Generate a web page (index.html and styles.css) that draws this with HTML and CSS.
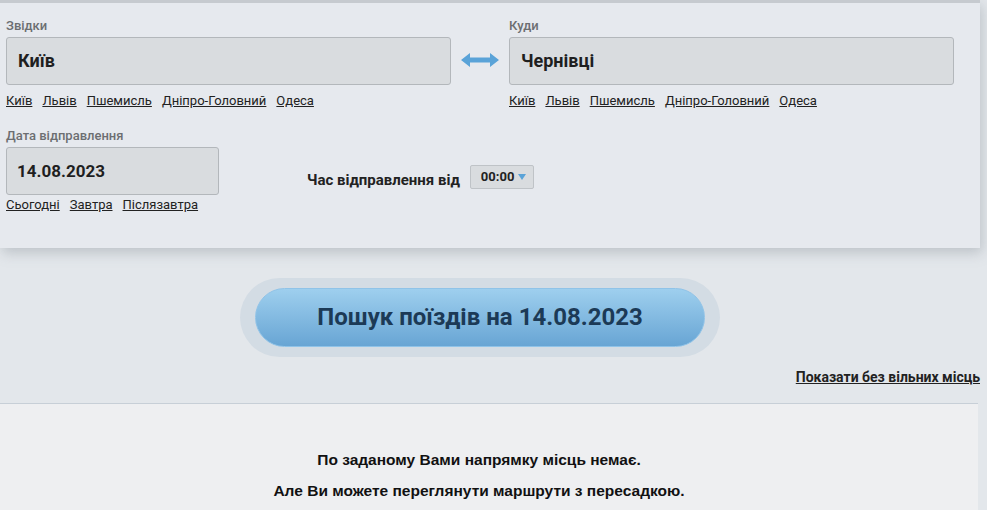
FILE: index.html
```html
<!DOCTYPE html>
<html lang="uk">

<head>
    <meta charset="UTF-8">
    <meta name="viewport" content="width=device-width, initial-scale=1.0">
    <title>Пошук поїздів</title>
    <link rel="stylesheet" href="styles.css">
</head>

<body>
    <div class="search">
        <div class="route">
            <div class="field wide">
                <div class="label">Звідки</div>
                <div class="input">Київ</div>
                <div class="links">
                    <a href="#">Київ</a>
                    <a href="#">Львів</a>
                    <a href="#">Пшемисль</a>
                    <a href="#">Дніпро-Головний</a>
                    <a href="#">Одеса</a>
                </div>
            </div>
            <div class="swap">
                <svg width="40" height="16" viewBox="0 0 40 16">
                    <path d="M1 8 L10 1 L10 5.5 L30 5.5 L30 1 L39 8 L30 15 L30 10.5 L10 10.5 L10 15 Z" fill="#5aa3d8" />
                </svg>
            </div>
            <div class="field wide">
                <div class="label">Куди</div>
                <div class="input">Чернівці</div>
                <div class="links">
                    <a href="#">Київ</a>
                    <a href="#">Львів</a>
                    <a href="#">Пшемисль</a>
                    <a href="#">Дніпро-Головний</a>
                    <a href="#">Одеса</a>
                </div>
            </div>
        </div>
        <div class="when">
            <div class="field date">
                <div class="label">Дата відправлення</div>
                <div class="input">14.08.2023</div>
                <div class="links close">
                    <a href="#">Сьогодні</a>
                    <a href="#">Завтра</a>
                    <a href="#">Післязавтра</a>
                </div>
            </div>
            <div class="time">
                <span class="time_label">Час відправлення від</span>
                <div class="select">00:00 <span class="caret"></span></div>
            </div>
        </div>
    </div>

    <div class="go">
        <div class="go_btn">Пошук поїздів на 14.08.2023</div>
    </div>

    <div class="extra">
        <a href="#">Показати без вільних місць</a>
    </div>

    <div class="result">
        <p>По заданому Вами напрямку місць немає.</p>
        <p>Але Ви можете переглянути маршрути з пересадкою.</p>
    </div>
</body>

</html>
```

FILE: styles.css
```css
body {
    margin: 0;
    background-color: #e3e7eb;
    font-family: Roboto, "Noto Sans", sans-serif;
    color: #222;
    height: 510px;
    overflow: hidden;
}

.search {
    width: 980px;
    box-sizing: border-box;
    border-top: 3px solid #c6cacf;
    background-color: #e6e9ee;
    padding: 15px 0 36px 6px;
    box-shadow: 2px 5px 12px rgba(120, 128, 138, 0.35);
}

.route {
    display: flex;
}

.field .label {
    font-size: 13px;
    font-weight: 500;
    color: #6c6e71;
    line-height: 16px;
    margin-bottom: 3px;
}

.input {
    height: 46px;
    box-sizing: content-box;
    border: 1px solid #b3b7bb;
    border-radius: 3px;
    background-color: #d9dcdf;
    font-size: 18px;
    font-weight: 700;
    color: #1f1f1f;
    line-height: 46px;
    padding-left: 11px;
}

.field.wide .input {
    width: 432px;
}

.field.date .input {
    font-size: 17px;
    padding-left: 10px;
    width: 201px;
}

.links {
    display: flex;
    gap: 10px;
    margin-top: 8px;
    font-size: 13px;
    line-height: 15px;
}

.links.close {
    margin-top: 2px;
}

.links a {
    color: #222;
}

.swap {
    width: 58px;
    display: flex;
    justify-content: center;
    padding-top: 34px;
}

.swap svg {
    display: block;
}

.when {
    display: flex;
    margin-top: 20px;
}

.time {
    display: flex;
    align-items: center;
    margin-left: 88px;
    margin-top: 37px;
    height: 24px;
}

.time_label {
    font-size: 15px;
    font-weight: 700;
    color: #222;
    margin-top: 6px;
}

.select {
    width: 52px;
    height: 22px;
    margin-left: 10px;
    border: 1px solid #bfc3c7;
    border-radius: 2px;
    background-color: #d9dcdf;
    font-size: 13px;
    font-weight: 700;
    line-height: 22px;
    padding-left: 10px;
    position: relative;
}

.caret {
    position: absolute;
    right: 7px;
    top: 8px;
    border-left: 4px solid transparent;
    border-right: 4px solid transparent;
    border-top: 6px solid #5aa3d8;
}

.go {
    width: 450px;
    margin: 30px 0 0 240px;
    padding: 10px 15px;
    border-radius: 40px;
    background-color: #d3dce4;
}

.go_btn {
    height: 57px;
    border: 1px solid #8fc3e8;
    border-radius: 30px;
    background: linear-gradient(#9ecfee, #68a5d4);
    color: #1c3a56;
    font-size: 24px;
    font-weight: 700;
    line-height: 57px;
    text-align: center;
    cursor: pointer;
}

.extra {
    width: 980px;
    text-align: right;
    margin-top: 12px;
    font-size: 14px;
    font-weight: 700;
    line-height: 16px;
}

.extra a {
    color: #222;
}

.result {
    width: 978px;
    box-sizing: border-box;
    margin-top: 18px;
    border-top: 1px solid #c7cfd7;
    background-color: #eeeff1;
    padding: 47px 20px 0 0;
    height: 120px;
    font-family: "Liberation Sans", Arial, sans-serif;
    font-size: 15.5px;
    font-weight: 700;
    color: #111;
    text-align: center;
}

.result p {
    margin: 0 0 13px;
    line-height: 18px;
}
```
